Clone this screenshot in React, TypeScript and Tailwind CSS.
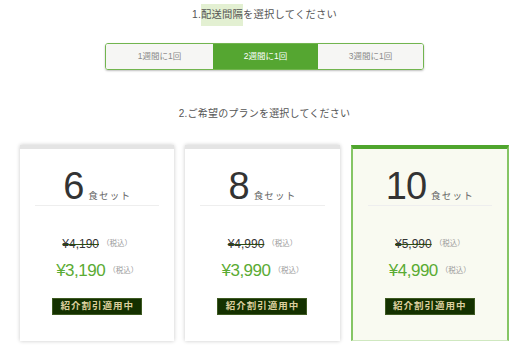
import React from "react";

const jp = { fontFamily: '"Liberation Sans", "Noto Sans CJK JP", sans-serif' };

type Plan = { n: string; old: string; price: string; selected?: boolean };

const plans: Plan[] = [
  { n: "6", old: "¥4,190", price: "¥3,190" },
  { n: "8", old: "¥4,990", price: "¥3,990" },
  { n: "10", old: "¥5,990", price: "¥4,990", selected: true },
];

function Card({ p }: { p: Plan }) {
  const cls = p.selected
    ? "border-t-4 border-x-2 border-b border-t-[#4fa52d] border-x-[#86c565] border-b-[#cfe8c0] bg-[#f9faf1]"
    : "border-t-4 border-t-[#e4e4e4] bg-white shadow-[0_0_4px_rgba(0,0,0,0.22)]";
  return (
    <div className={`flex-1 h-[196px] flex flex-col items-center ${cls}`}>
      <div className={`flex items-baseline justify-center pt-[18px] ${p.selected ? "" : ""}`}>
        <span className="text-[38px] leading-[38px] text-[#333] tracking-[-1px]" style={jp}>
          {p.n}
        </span>
        <span className="ml-[5px] text-[9.5px] text-[#666] tracking-[1.2px]" style={jp}>
          食セット
        </span>
      </div>
      <div className="w-[calc(100%-30px)] h-px bg-[#eeeeee]" />
      <div className="mt-[30px] h-[16px] flex items-center" style={jp}>
        <span className="text-[12px] text-[#333] line-through decoration-[#2d4a12]">{p.old}</span>
        <span className="ml-[3px] text-[7.5px] text-[#999]">（税込）</span>
      </div>
      <div className="mt-[8px] h-[22px] flex items-center" style={jp}>
        <span className="text-[17px] text-[#5aab33] tracking-[-0.5px]">{p.price}</span>
        <span className="ml-[3px] text-[7.5px] text-[#999]">（税込）</span>
      </div>
      <div
        className="mt-[16px] w-[90px] h-[17px] flex items-center justify-center bg-[#143100] border border-[#3e5a22] text-[9.5px] font-bold text-[#dccf9e] tracking-[1px]"
        style={jp}
      >
        紹介割引適用中
      </div>
    </div>
  );
}

export default function App() {
  return (
    <div className="w-[529px] h-[350px] bg-white overflow-hidden" style={jp}>
      <div className="h-[30px] flex items-center justify-center text-[10.3px] text-[#555] tracking-[0.2px]">
        <span>1.</span>
        <span className="bg-[#e3f0d2] py-[3px]">配送間隔</span>
        <span>を選択してください</span>
      </div>
      <div className="mt-[13px] mx-auto w-[319px] h-[27px] flex border border-[#72b54f] rounded-[3px] overflow-hidden shadow-[0_1px_2px_rgba(0,0,0,0.25)] text-[8.5px]">
        <div className="w-[107px] flex items-center justify-center bg-[#f6f6f4] text-[#8a8a8a]">1週間に1回</div>
        <div className="w-[105px] flex items-center justify-center bg-[#55a631] text-white">2週間に1回</div>
        <div className="flex-1 flex items-center justify-center bg-[#f6f6f4] text-[#8a8a8a]">3週間に1回</div>
      </div>
      <div className="mt-[28px] h-[30px] flex items-center justify-center text-[10px] text-[#555] tracking-[0.2px]">
        2.ご希望のプランを選択してください
      </div>
      <div className="mt-[17px] px-[20px] flex gap-[11px]">
        {plans.map((p) => (
          <Card key={p.n} p={p} />
        ))}
      </div>
    </div>
  );
}
